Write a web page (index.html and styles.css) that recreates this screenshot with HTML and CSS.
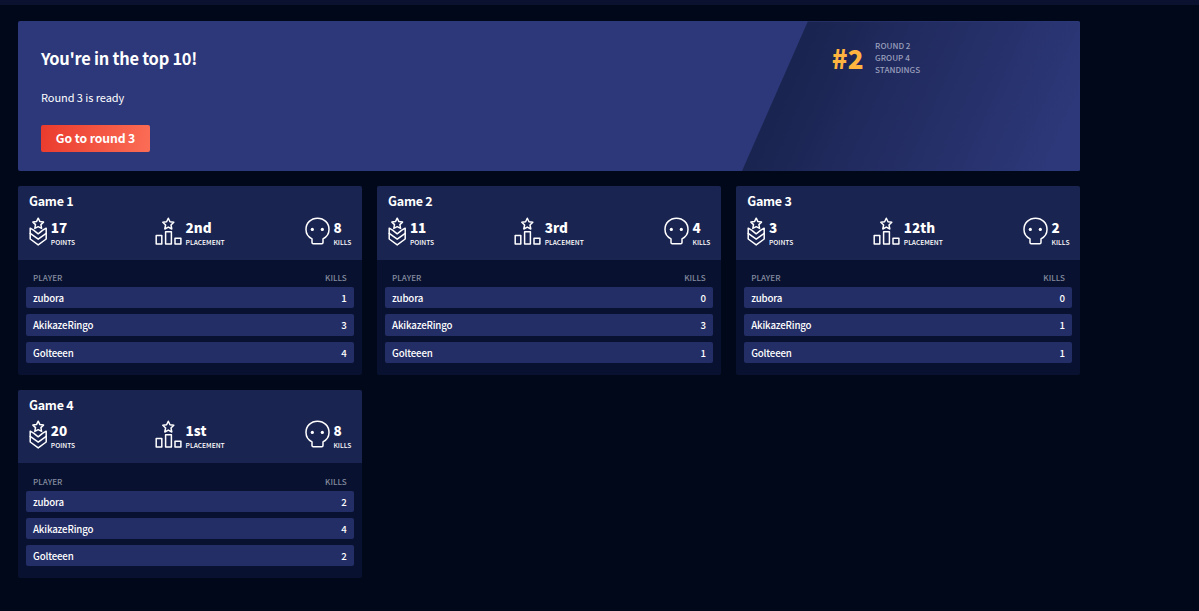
FILE: index.html
```html
<!DOCTYPE html>
<html lang="en">
<head>
<meta charset="utf-8">
<title>Round 2 standings</title>
<link rel="stylesheet" href="styles.css">
</head>
<body>
<svg class="sprite" aria-hidden="true">
  <symbol id="medal" viewBox="0 0 18 29">
    <path d="M9.200 1.200 10.900 4.600 14.500 5.100 11.900 7.600 12.600 11.400 9.200 9.700 5.800 11.400 6.500 7.600 3.900 5.100 7.500 4.600Z"/>
    <path d="M4.600 13.200 1.200 11.200V22L9.200 27.900 17.200 22V11.200L13.800 13.200M4.600 13.200 9.200 16.800 13.800 13.200"/>
    <path d="M1.200 16.400 9.200 22.200 17.200 16.400"/>
  </symbol>
  <symbol id="podium" viewBox="0 0 27 28">
    <path d="M13.300 1.200 15 4.800 18.800 5.300 16 8 16.800 12 13.300 10.100 9.800 12 10.600 8 7.800 5.300 11.600 4.800Z"/>
    <path d="M1.200 18.600H6.800V27H1.200ZM10.600 14.800H16.400V27H10.600ZM20 21.200H25.900V27H20Z"/>
  </symbol>
  <symbol id="skull" viewBox="0 0 25 28">
    <path d="M7 21.800C3.500 20 1 16.500 1 12.400C1 6 6 1.200 12.500 1.200S24 6 24 12.400C24 16.500 21.500 20 18 21.800V25.600Q18 26.800 16.800 26.800H8.200Q7 26.800 7 25.600Z"/>
    <circle class="eye" cx="7.300" cy="12.400" r="1.600"/><circle class="eye" cx="17.300" cy="12.400" r="1.600"/>
  </symbol>
</svg>
<div class="topbar"></div>
<main class="page">
  <section class="banner">
    <div class="intro">
      <h1>You're in the top 10!</h1>
      <p>Round 3 is ready</p>
      <button class="go">Go to round 3</button>
    </div>
    <div class="standing">
      <strong class="rank">#2</strong>
      <div class="rank-label">ROUND 2<br>GROUP 4<br>STANDINGS</div>
    </div>
  </section>
  <section class="games">
    <article class="game">
      <header class="summary">
        <h2>Game 1</h2>
        <div class="stats">
          <div class="stat"><svg class="medal"><use href="#medal"/></svg><div><b>17</b><small class="points">POINTS</small></div></div>
          <div class="stat"><svg class="podium"><use href="#podium"/></svg><div><b>2nd</b><small class="placement">PLACEMENT</small></div></div>
          <div class="stat"><svg class="skull"><use href="#skull"/></svg><div><b>8</b><small class="kills">KILLS</small></div></div>
        </div>
      </header>
      <div class="players">
        <div class="columns"><span>PLAYER</span><span>KILLS</span></div>
        <div class="player"><span>zubora</span><span>1</span></div>
        <div class="player"><span>AkikazeRingo</span><span>3</span></div>
        <div class="player"><span>Golteeen</span><span>4</span></div>
      </div>
    </article>
    <article class="game">
      <header class="summary">
        <h2>Game 2</h2>
        <div class="stats">
          <div class="stat"><svg class="medal"><use href="#medal"/></svg><div><b>11</b><small class="points">POINTS</small></div></div>
          <div class="stat"><svg class="podium"><use href="#podium"/></svg><div><b>3rd</b><small class="placement">PLACEMENT</small></div></div>
          <div class="stat"><svg class="skull"><use href="#skull"/></svg><div><b>4</b><small class="kills">KILLS</small></div></div>
        </div>
      </header>
      <div class="players">
        <div class="columns"><span>PLAYER</span><span>KILLS</span></div>
        <div class="player"><span>zubora</span><span>0</span></div>
        <div class="player"><span>AkikazeRingo</span><span>3</span></div>
        <div class="player"><span>Golteeen</span><span>1</span></div>
      </div>
    </article>
    <article class="game">
      <header class="summary">
        <h2>Game 3</h2>
        <div class="stats">
          <div class="stat"><svg class="medal"><use href="#medal"/></svg><div><b>3</b><small class="points">POINTS</small></div></div>
          <div class="stat"><svg class="podium"><use href="#podium"/></svg><div><b>12th</b><small class="placement">PLACEMENT</small></div></div>
          <div class="stat"><svg class="skull"><use href="#skull"/></svg><div><b>2</b><small class="kills">KILLS</small></div></div>
        </div>
      </header>
      <div class="players">
        <div class="columns"><span>PLAYER</span><span>KILLS</span></div>
        <div class="player"><span>zubora</span><span>0</span></div>
        <div class="player"><span>AkikazeRingo</span><span>1</span></div>
        <div class="player"><span>Golteeen</span><span>1</span></div>
      </div>
    </article>
    <article class="game">
      <header class="summary">
        <h2>Game 4</h2>
        <div class="stats">
          <div class="stat"><svg class="medal"><use href="#medal"/></svg><div><b>20</b><small class="points">POINTS</small></div></div>
          <div class="stat"><svg class="podium"><use href="#podium"/></svg><div><b>1st</b><small class="placement">PLACEMENT</small></div></div>
          <div class="stat"><svg class="skull"><use href="#skull"/></svg><div><b>8</b><small class="kills">KILLS</small></div></div>
        </div>
      </header>
      <div class="players">
        <div class="columns"><span>PLAYER</span><span>KILLS</span></div>
        <div class="player"><span>zubora</span><span>2</span></div>
        <div class="player"><span>AkikazeRingo</span><span>4</span></div>
        <div class="player"><span>Golteeen</span><span>2</span></div>
      </div>
    </article>
  </section>
</main>
</body>
</html>
```
FILE: styles.css
```css
* { box-sizing: border-box; margin: 0; padding: 0; }
body {
  background: #000819;
  color: #fff;
  font-family: "Noto Sans CJK SC", "Noto Sans", sans-serif;
  min-height: 611px;
  overflow: hidden;
}
.sprite { display: none; }
.topbar { height: 5px; background: #0a1230; }
.page { width: 1062.3px; margin: 16.4px 0 0 18px; }
.banner {
  display: flex;
  justify-content: space-between;
  height: 150px;
  background: #2c3879;
  border-radius: 2px;
  overflow: hidden;
}
.intro { padding: 25px 23px; }
h1 { font-size: 16.4px; line-height: 24px; font-weight: 700; letter-spacing: -0.24px; white-space: nowrap; }
.intro p { margin-top: 17px; font-size: 11px; line-height: 20px; letter-spacing: -0.06px; }
.go {
  display: block;
  width: 109px;
  height: 27px;
  margin-top: 17.500px;
  border: 0;
  border-radius: 2px;
  background: linear-gradient(100deg, #ea3b2d, #fb6d56);
  color: #fff;
  font: 700 12.200px/27px "Noto Sans CJK SC", "Noto Sans", sans-serif;
  letter-spacing: -0.1px;
  white-space: nowrap;
}
.standing {
  display: flex;
  width: 338.5px;
  padding: 18px 0 0 90px;
  background: linear-gradient(114deg, #1a2450 18%, #202a5d 40%, #2c3879 92%);
  clip-path: polygon(66px 0, 100% 0, 100% 100%, 0 100%);
}
.rank { width: 43.300px; font-size: 26px; line-height: 37px; font-weight: 900; color: #ffb440; }
.rank-label { padding-top: 1px; font-size: 8.100px; font-weight: 500; line-height: 11.6px; color: #9a9fbc; }
.games { display: grid; grid-template-columns: repeat(3, 1fr); gap: 15px; margin-top: 15px; }
.game { height: 188.5px; border-radius: 2px; overflow: hidden; background: #081230; }
.summary { height: 73.5px; padding: 6px 11px 0; background: #1a2450; }
h2 { font-size: 12.500px; line-height: 18px; font-weight: 700; letter-spacing: -0.25px; }
.stats { display: flex; justify-content: space-between; margin-top: 6.500px; }
.stat { display: flex; gap: 3.800px; }
.stat svg { fill: none; stroke: #fff; stroke-width: 1.500; stroke-linejoin: round; stroke-linecap: round; }
.eye { fill: #fff; stroke: none; }
.stat .medal { width: 18px; height: 29px; }
.stat .podium { width: 27px; height: 28px; }
.stat .skull { width: 25px; height: 28px; }
.stat b { display: block; font-size: 13.500px; font-weight: 900; line-height: 20px; }
.stat small { display: block; margin-top: 1px; font-size: 6.700px; font-weight: 500; line-height: 8px; }
.points { width: 24.500px; }
.placement { width: 39.500px; }
.kills { width: 17.700px; }
.players { padding: 11.200px 7.900px 0 7.500px; }
.columns {
  display: flex;
  justify-content: space-between;
  padding: 0 7.500px;
  font-size: 8.100px;
  font-weight: 500;
  line-height: 13.400px;
  height: 16px;
  color: #858a9f;
}
.player {
  display: flex;
  justify-content: space-between;
  height: 21.200px;
  margin-bottom: 6.150px;
  padding: 0 7.500px;
  border-radius: 2px;
  background: #242e66;
  font-size: 9.700px;
  font-weight: 500;
  letter-spacing: -0.16px;
  line-height: 22px;
}
```
